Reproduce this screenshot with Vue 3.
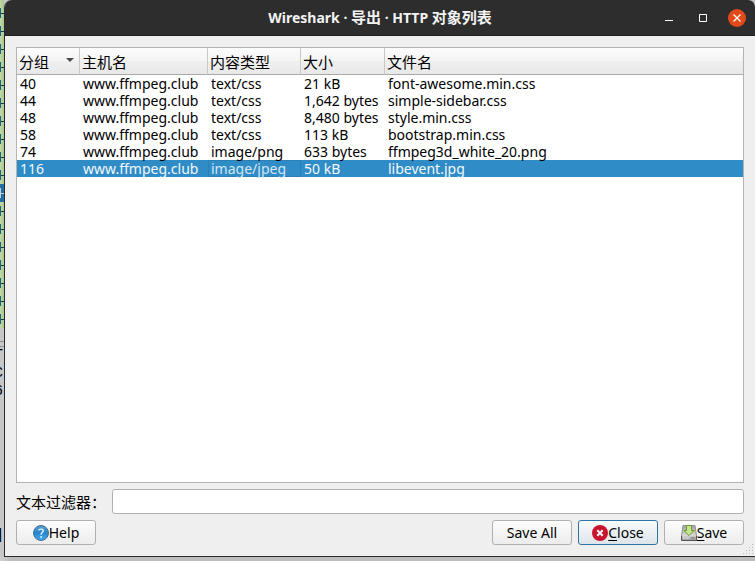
<script setup>
import { ref } from 'vue'

const filter = ref('')
const selected = ref(116)
const columns = ['分组', '主机名', '内容类型', '大小', '文件名']
const rows = [
  { id: 40, host: 'www.ffmpeg.club', type: 'text/css', size: '21 kB', name: 'font-awesome.min.css' },
  { id: 44, host: 'www.ffmpeg.club', type: 'text/css', size: '1,642 bytes', name: 'simple-sidebar.css' },
  { id: 48, host: 'www.ffmpeg.club', type: 'text/css', size: '8,480 bytes', name: 'style.min.css' },
  { id: 58, host: 'www.ffmpeg.club', type: 'text/css', size: '113 kB', name: 'bootstrap.min.css' },
  { id: 74, host: 'www.ffmpeg.club', type: 'image/png', size: '633 bytes', name: 'ffmpeg3d_white_20.png' },
  { id: 116, host: 'www.ffmpeg.club', type: 'image/jpeg', size: '50 kB', name: 'libevent.jpg' }
]
</script>

<template>
  <div class="desktop">
    <div class="behind">
      <div class="packets">
        <div v-for="n in 18" :key="n" class="packet" :class="{ current: n === 11 }"><i></i></div>
      </div>
      <div class="splitter"></div>
      <div class="bytes"><span>T</span><span>C</span><span>6</span></div>
      <div class="status"><span>]</span></div>
    </div>

    <main class="window">
      <header class="titlebar">
        <h1>Wireshark · <span class="cjk">导出</span> · HTTP <span class="cjk">对象列表</span></h1>
        <div class="controls">
          <button type="button" aria-label="Minimize">
            <svg width="18" height="18" viewBox="0 0 18 18"><path d="M5 11.5h8" stroke="#fff" /></svg>
          </button>
          <button type="button" aria-label="Maximize">
            <svg width="18" height="18" viewBox="0 0 18 18"><path d="M5.5 5.500h7v7h-7z" fill="none" stroke="#fff" /></svg>
          </button>
          <button type="button" aria-label="Close window">
            <svg width="18" height="18" viewBox="0 0 18 18">
              <circle cx="9" cy="9" r="9" fill="#e24a19" />
              <path d="M5.500 5.500l7 7M12.500 5.500l-7 7" stroke="#fff" stroke-width="1.300" />
            </svg>
          </button>
        </div>
      </header>

      <div class="body">
        <div class="list">
          <table>
            <colgroup>
              <col class="c-id" /><col class="c-host" /><col class="c-type" /><col class="c-size" /><col />
            </colgroup>
            <thead>
              <tr>
                <th v-for="(c, i) in columns" :key="c" scope="col">
                  <div class="head">
                    <span>{{ c }}</span>
                    <svg v-if="i === 0" width="8" height="4" viewBox="0 0 8 4"><path d="M0 0h8L4 4z" fill="#4a4a4a" /></svg>
                  </div>
                </th>
              </tr>
            </thead>
            <tbody>
              <tr v-for="r in rows" :key="r.id" :class="{ selected: selected === r.id }" @click="selected = r.id">
                <td>{{ r.id }}</td>
                <td>{{ r.host }}</td>
                <td class="type">{{ r.type }}</td>
                <td>{{ r.size }}</td>
                <td>{{ r.name }}</td>
              </tr>
            </tbody>
          </table>
        </div>

        <div class="filter">
          <label for="filter">文本过滤器：</label>
          <input id="filter" v-model="filter" type="text" />
        </div>

        <footer class="actions">
          <button type="button" class="btn">
            <svg width="16" height="16" viewBox="0 0 16 16">
              <defs>
                <linearGradient id="helpFill" x1="0" y1="0" x2="0" y2="1">
                  <stop offset="0" stop-color="#5a9fd0" /><stop offset=".5" stop-color="#2585cf" /><stop offset="1" stop-color="#41b1f0" />
                </linearGradient>
              </defs>
              <circle cx="8" cy="8" r="7.500" fill="url(#helpFill)" stroke="#476f8f" />
              <path d="M5.800 5.400C6 3.700 10.300 3.500 10.200 6c-.1 1.600-2.100 1.700-2.100 3.700" fill="none" stroke="#eef7fd" stroke-width="1.400" />
              <circle cx="8.100" cy="12" r=".9" fill="#eef7fd" />
            </svg>
            <span>Help</span>
          </button>
          <span class="spacer"></span>
          <button type="button" class="btn">Save All</button>
          <button type="button" class="btn default">
            <svg width="16" height="16" viewBox="0 0 16 16">
              <circle cx="8" cy="8" r="8" fill="#c8142f" />
              <path d="M5.300 5.300l5.400 5.400M10.700 5.300l-5.400 5.400" stroke="#fff" stroke-width="2" />
            </svg>
            <span><u>C</u>lose</span>
          </button>
          <button type="button" class="btn">
            <svg width="16" height="16" viewBox="0 0 16 16">
              <defs>
                <linearGradient id="diskFill" x1="0" y1="0" x2="0" y2="1">
                  <stop offset="0" stop-color="#a4a4a4" /><stop offset="1" stop-color="#ececec" />
                </linearGradient>
              </defs>
              <path d="M2 .5h12l1.500 10.500v3.500H.5V11z" fill="url(#diskFill)" stroke="#929292" />
              <path d="M1 11.500h14v3H1z" fill="#b4b4b4" />
              <path d="M2 13h6" stroke="#dedede" />
              <path d="M10 13h4" stroke="#777" />
              <path d="M.5 11v4.500h15V11" fill="none" stroke="#555" />
              <path d="M5.500 .5h5v5h2.600L8 10.600 2.900 5.500h2.600z" fill="#c5e58b" stroke="#689b25" />
            </svg>
            <span><u>S</u>ave</span>
          </button>
        </footer>
        <svg class="grip" width="11" height="11" viewBox="0 0 11 11" fill="#b9b9b9">
          <path d="M9 0h1v1h-1zM6 3h1v1h-1zM9 3h1v1h-1zM3 6h1v1h-1zM6 6h1v1h-1zM9 6h1v1h-1zM0 9h1v1h-1zM3 9h1v1h-1zM6 9h1v1h-1zM9 9h1v1h-1z" />
        </svg>
      </div>
    </main>
  </div>
</template>

<style>
body {
  margin: 0;
  background: #bcbcbc;
}
</style>

<style scoped>
* {
  box-sizing: border-box;
}
.desktop {
  display: flex;
  min-height: 100vh;
  padding-bottom: 4px;
  background: linear-gradient(to right, #d0d0d0, #bcbcbc 12px);
  font-family: "Noto Sans", "Noto Sans CJK SC", sans-serif;
  font-size: 14px;
  color: #000;
}
.behind {
  display: flex;
  flex-direction: column;
  flex: none;
  width: 4px;
  overflow: hidden;
  background: #c6c8ca;
}
.packets {
  padding-top: 4px;
  background: linear-gradient(to right, #c3dca6, #abc58f);
}
.packet {
  display: flex;
  align-items: center;
  height: 18px;
}
.packet::before {
  content: "";
  width: 1px;
  height: 10px;
  background: #1a6487;
}
.packet i {
  flex: 1;
  height: 1px;
  background: #173c3c;
}
.packet.current {
  background: #246f9f;
}
.packet.current::before,
.packet.current i {
  background: #c4d0da;
}
.splitter {
  height: 6px;
  margin-top: 13px;
  border-top: 1px solid #8f8f8f;
  border-bottom: 1px solid #8f8f8f;
}
.bytes,
.status {
  display: flex;
  flex-direction: column;
  align-items: flex-end;
  font-family: "Liberation Mono", monospace;
  font-size: 15px;
  line-height: 18px;
}
.bytes {
  padding-right: 1px;
}
.status {
  margin-top: auto;
  padding-bottom: 12px;
}
.window {
  display: flex;
  flex-direction: column;
  flex: 1;
  min-width: 0;
  border-left: 1px solid #2b2b2b;
  border-bottom: 1px solid #2b2b2b;
  border-radius: 8px 8px 0 0;
  background: #efefef;
}
.titlebar {
  display: grid;
  grid-template-columns: 1fr auto 1fr;
  align-items: center;
  height: 36px;
  padding: 0 9px;
  border-bottom: 1px solid #1c1c1c;
  border-radius: 7px 7px 0 0;
  background: #2d2d2d;
}
.titlebar h1 {
  grid-column: 2;
  margin: 0;
  font-size: 14px;
  line-height: 20px;
  font-weight: 700;
  color: #f3f3f3;
  white-space: nowrap;
}
.cjk {
  font-size: 15px;
}
.controls {
  display: flex;
  justify-content: flex-end;
  gap: 16px;
}
.controls button {
  display: flex;
  padding: 0;
  border: 0;
  background: none;
}
.body {
  position: relative;
  display: flex;
  flex-direction: column;
  flex: 1;
  gap: 6px;
  padding: 11px;
}
.list {
  flex: 1;
  border: 1px solid #b4b4b4;
  background: #fff;
}
table {
  width: 100%;
  table-layout: fixed;
  border-collapse: separate;
  border-spacing: 0;
}
.c-id { width: 63px; }
.c-host { width: 128px; }
.c-type { width: 93px; }
.c-size { width: 84px; }
th {
  height: 27px;
  padding: 0 5px 0 2px;
  border-right: 1px solid #c8c8c8;
  border-bottom: 1px solid #a9a9a9;
  background: linear-gradient(#fcfcfc, #f4f4f4 50%, #efefef 52%, #e8e8e8);
  font-size: 15px;
  line-height: 20px;
  font-weight: 400;
  text-align: left;
}
th:last-child {
  border-right: 0;
}
.head {
  display: flex;
  align-items: center;
  justify-content: space-between;
  padding-top: 2px;
}
.head svg {
  margin-bottom: 4px;
}
td {
  height: 17px;
  padding: 0 0 0 3px;
  line-height: 17px;
  white-space: nowrap;
}
.selected td {
  background: #308cc6;
  color: #f2f8fc;
}
.selected .type {
  color: #d3e6f3;
  box-shadow: inset 0 0 0 1px #2b80b5;
}
.filter {
  display: flex;
  align-items: center;
  gap: 6px;
}
.filter label {
  font-size: 15px;
  line-height: 20px;
  white-space: nowrap;
}
.filter input {
  flex: 1;
  min-width: 0;
  height: 25px;
  padding: 0 4px;
  border: 1px solid #b0b0b0;
  border-radius: 3px;
  background: #fff;
  font: inherit;
}
.actions {
  display: flex;
  gap: 6px;
}
.spacer {
  flex: 1;
}
.btn {
  display: flex;
  align-items: center;
  justify-content: center;
  min-width: 80px;
  height: 25px;
  padding: 0 12px;
  border: 1px solid #b0b0b0;
  border-radius: 3px;
  background: linear-gradient(#fdfdfd, #ececec);
  font: inherit;
  color: #000;
}
.btn.default {
  border-color: #2b75a5;
  background: linear-gradient(#f9fbfd, #dde5ea);
}
.btn u {
  text-underline-offset: 2px;
}
.grip {
  position: absolute;
  right: 1px;
  bottom: 1px;
}
</style>
